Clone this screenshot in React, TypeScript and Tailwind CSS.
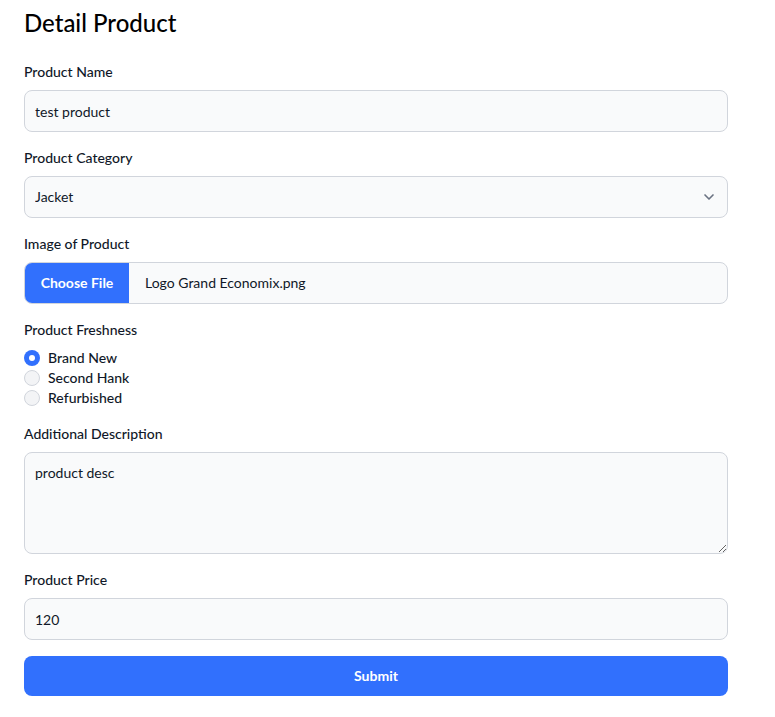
import { ChevronDown } from "lucide-react";

const font = { fontFamily: "Lato, 'Noto Sans', sans-serif" };

function Label({ children }: { children: React.ReactNode }) {
  return <label className="block mb-2 text-sm leading-5 font-medium text-gray-900">{children}</label>;
}

const inputCls =
  "block w-full h-[42px] rounded-lg border border-gray-300 bg-gray-50 px-[10px] text-sm text-gray-900 outline-none";

export default function App() {
  const options = ["Brand New", "Second Hank", "Refurbished"];

  return (
    <div className="bg-white min-h-screen px-6 pt-[7px] pb-6 w-[752px]" style={font}>
      <h1 className="text-2xl leading-8 font-medium text-black mb-[23px]">Detail Product</h1>

      <form className="flex flex-col gap-4" onSubmit={(e) => e.preventDefault()}>
        <div>
          <Label>Product Name</Label>
          <input className={inputCls} defaultValue="test product" />
        </div>

        <div>
          <Label>Product Category</Label>
          <div className="relative">
            <select className={inputCls + " appearance-none"} defaultValue="Jacket">
              <option>Jacket</option>
              <option>Shirt</option>
              <option>Shoes</option>
            </select>
            <ChevronDown
              className="absolute right-[11px] top-1/2 -translate-y-1/2 text-gray-500 pointer-events-none"
              size={16}
              strokeWidth={2.5}
            />
          </div>
        </div>

        <div>
          <Label>Image of Product</Label>
          <div className="flex h-[42px] w-full rounded-lg border border-gray-300 bg-gray-50 overflow-hidden">
            <button
              type="button"
              className="h-full w-[104px] bg-[#3170fd] text-white text-sm font-bold"
            >
              Choose File
            </button>
            <span className="flex items-center pl-4 text-sm text-gray-900">Logo Grand Economix.png</span>
          </div>
        </div>

        <div>
          <Label>Product Freshness</Label>
          <div className="flex flex-col">
            {options.map((o, i) => (
              <label key={o} className="flex items-center h-5 text-sm text-gray-900 font-medium">
                {i === 0 ? (
                  <span className="w-4 h-4 rounded-full bg-[#3170fd] flex items-center justify-center">
                    <span className="w-[6px] h-[6px] rounded-full bg-white" />
                  </span>
                ) : (
                  <span className="w-4 h-4 rounded-full bg-gray-100 border border-gray-300" />
                )}
                <span className="ml-2">{o}</span>
              </label>
            ))}
          </div>
        </div>

        <div>
          <Label>Additional Description</Label>
          <textarea
            className="block w-full h-[102px] rounded-lg border border-gray-300 bg-gray-50 px-[10px] py-[10px] text-sm text-gray-900 outline-none"
            defaultValue="product desc"
          />
        </div>

        <div>
          <Label>Product Price</Label>
          <input className={inputCls} defaultValue="120" />
        </div>

        <button
          type="submit"
          className="w-full h-10 rounded-lg bg-[#3170fd] text-white text-sm font-bold"
        >
          Submit
        </button>
      </form>
    </div>
  );
}
